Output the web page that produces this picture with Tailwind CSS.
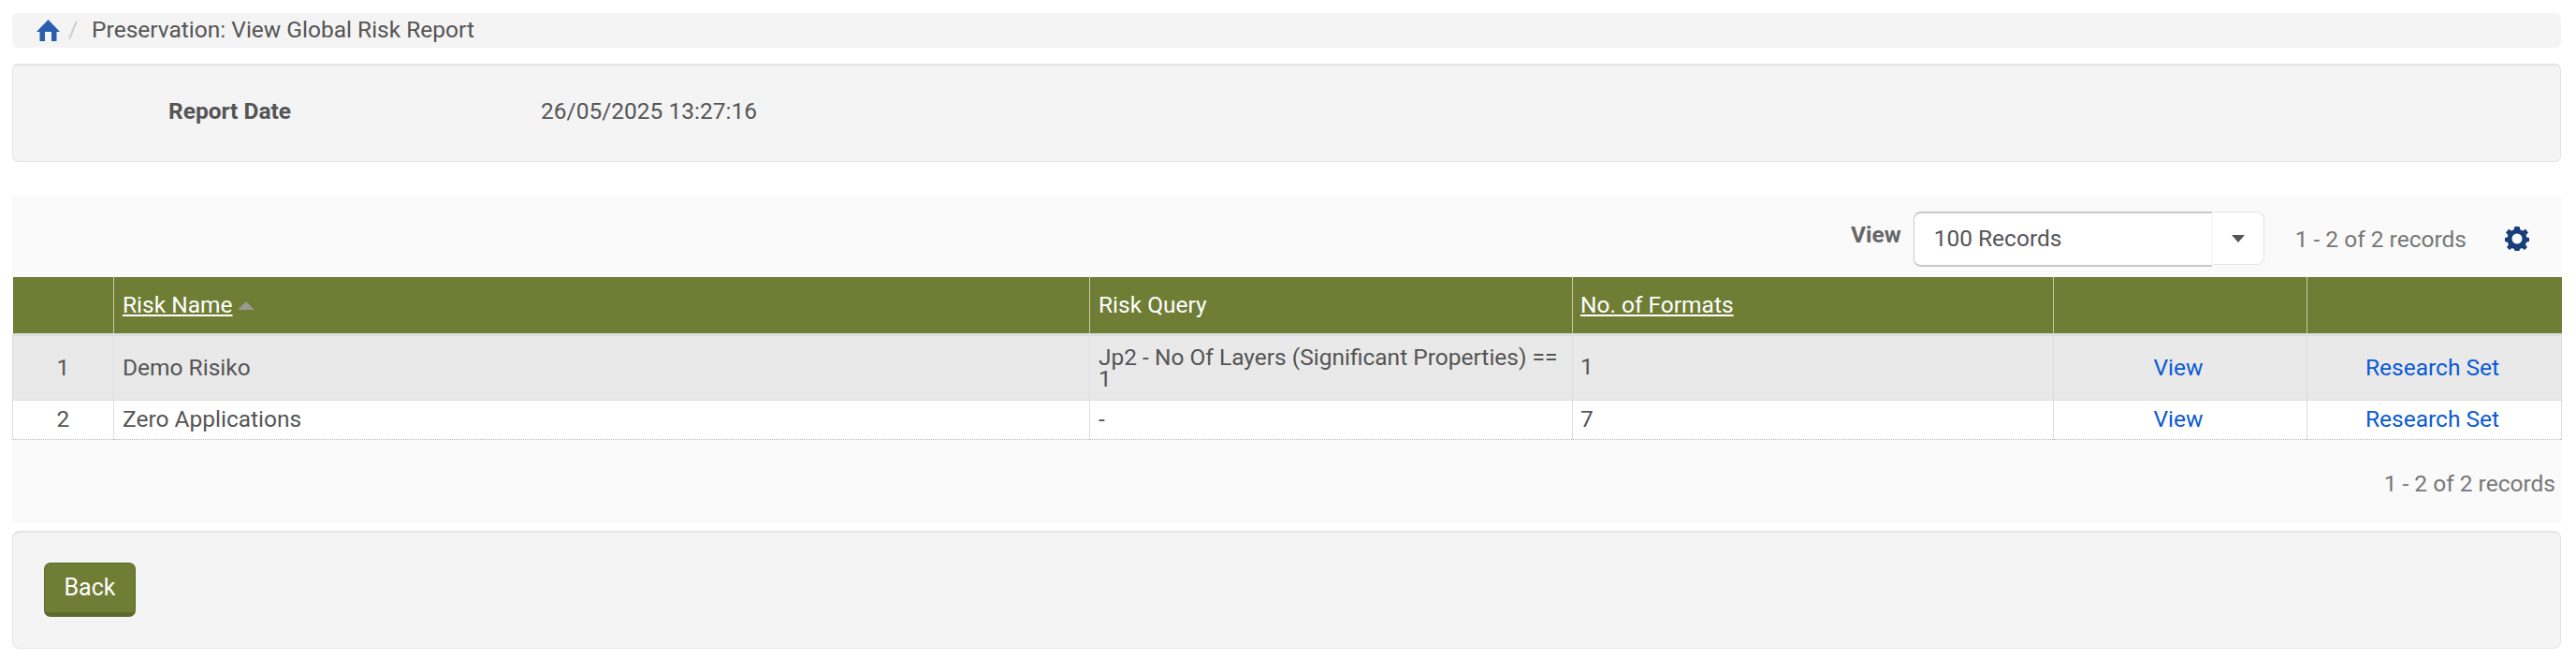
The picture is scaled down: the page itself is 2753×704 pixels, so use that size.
<!DOCTYPE html>
<html>
<head>
<meta charset="utf-8">
<script src="https://cdn.jsdelivr.net/npm/@tailwindcss/browser@4"></script>
</head>
<body class="bg-white font-['Roboto',sans-serif] text-[24.5px] text-[#555555] overflow-hidden">
<div class="w-[2753px] h-[704px] pl-[13px] pr-[16px] pt-[14px]">
  <nav class="h-[37px] bg-[#f4f4f4] rounded-[6px] flex items-center pl-[26px]">
    <svg class="w-[25px] h-[23px]" viewBox="0 0 25 23"><path fill="#2a5db0" d="M12.500 0 L25 13 L21.500 13 L21.500 23 L16 23 L16 13 L9 13 L9 23 L3.500 23 L3.500 13 L0 13 Z"/></svg>
    <span class="ml-[9px] text-[#cccccc]">/</span>
    <span class="ml-[15px]">Preservation: View Global Risk Report</span>
  </nav>
  <section class="mt-[17px] h-[105px] bg-[#f4f4f4] border border-[#e4e4e4] border-t-2 rounded-[6px] flex items-center pb-[3px]">
    <span class="ml-[166px] w-[398px] font-bold">Report Date</span>
    <span>26/05/2025 13:27:16</span>
  </section>
  <section class="mt-[35px] h-[350px] bg-[#fafafa]">
    <div class="h-[88px] flex items-start justify-end pt-[18px]">
      <span class="font-bold text-[#666666] mt-[7px] mr-[13px]">View</span>
      <div class="w-[375px] h-[59px] flex items-start">
        <span class="w-[319px] h-[59px] bg-white border border-[#c8c8c8] border-y-2 border-r-0 rounded-l-[8px] flex items-center pl-[21px]">100 Records</span>
        <span class="w-[56px] h-[57px] bg-white flex items-center justify-center border border-l-[#f7f7f7] border-y-[#e4e4e4] border-r-[#e0e0e0] rounded-r-[8px]">
          <span class="w-0 h-0 border-x-[7px] border-x-transparent border-t-[8px] border-t-[#555555]"></span>
        </span>
      </div>
      <span class="ml-[33px] mt-[12px] text-[#777777]">1 - 2 of 2 records</span>
      <svg class="ml-[41px] mt-[16px] w-[26px] h-[26px]" viewBox="0 0 26 26"><path fill="#173d7a" fill-rule="evenodd" d="M10.500 0H15.500L16.500 3.500 19 4.600 22 2.800 25 6.500 22.600 9 23.200 11.500 26 12V16L23 16.800 22 19.500 24 22 21 25 18.500 23 16 24 15.500 26H10.500L10 24 7.500 23 5 25 2 22 4 19.500 3 16.800 0 16V12L2.800 11.500 3.400 9 1 6.500 4 2.800 7 4.600 9.500 3.500ZM13 7.500A5.500 5.500 0 1 0 13 18.500 5.500 5.500 0 1 0 13 7.500Z"/></svg>
      <span class="w-[34px]"></span>
    </div>
    <table class="w-full table-fixed border-collapse">
      <colgroup>
        <col class="w-[108px]"><col class="w-[1043px]"><col class="w-[516px]"><col class="w-[514px]"><col class="w-[271px]"><col class="w-[272px]">
      </colgroup>
      <thead>
        <tr class="h-[61px] bg-[#6f7d35] text-white text-left font-normal">
          <th class="border-r border-[#c5ccaa] font-normal"></th>
          <th class="border-r border-[#c5ccaa] font-normal pl-[9px] pt-[2px]"><span class="underline">Risk Name</span><span class="inline-block ml-[6px] mb-[3px] align-middle w-0 h-0 border-x-[9px] border-x-transparent border-b-[9px] border-b-[#9a9a90]"></span></th>
          <th class="border-r border-[#c5ccaa] font-normal pl-[9px] pt-[2px]">Risk Query</th>
          <th class="border-r border-[#c5ccaa] font-normal pl-[8px] pt-[2px]"><span class="underline">No. of Formats</span></th>
          <th class="border-r border-[#c5ccaa] font-normal"></th>
          <th class="font-normal"></th>
        </tr>
      </thead>
      <tbody>
        <tr class="h-[70px] bg-[#e9e9e9] border-t-[3px] border-[#dddddd] border-b border-b-[#dcdcdc]">
          <td class="text-center border-x border-[#dcdcdc] pt-[2px]">1</td>
          <td class="pl-[9px] border-r border-[#dcdcdc] pt-[2px]">Demo Risiko</td>
          <td class="pl-[9px] pr-[9px] border-r border-[#dcdcdc] leading-[23px]">Jp2 - No Of Layers (Significant Properties) == 1</td>
          <td class="pl-[8px] border-r border-[#dcdcdc]">1</td>
          <td class="text-center border-r border-[#dcdcdc] text-[#0a5ad4] pt-[2px] pr-[4px]">View</td>
          <td class="text-center border-r border-[#dcdcdc] text-[#0a5ad4] pt-[2px] pr-[4px]">Research Set</td>
        </tr>
        <tr class="h-[42px] bg-white border-b border-dotted border-b-[#bbbbbb]">
          <td class="text-center border-x border-[#dcdcdc]">2</td>
          <td class="pl-[9px] border-r border-[#dcdcdc]">Zero Applications</td>
          <td class="pl-[9px] border-r border-[#dcdcdc]">-</td>
          <td class="pl-[8px] border-r border-[#dcdcdc]">7</td>
          <td class="text-center border-r border-[#dcdcdc] text-[#0a5ad4] pr-[4px]">View</td>
          <td class="text-center border-r border-[#dcdcdc] text-[#0a5ad4] pr-[4px]">Research Set</td>
        </tr>
      </tbody>
    </table>
    <div class="h-[87px] flex items-center justify-end pr-[6px] pt-[8px] text-[#777777]">1 - 2 of 2 records</div>
  </section>
  <section class="mt-[9px] h-[126px] bg-[#f4f4f4] border border-[#e4e4e4] border-t-2 rounded-[8px] pl-[33px] pt-[32px]">
    <button class="w-[98px] h-[58px] bg-[#6f7d35] border border-[#5d6a2c] border-b-[5px] rounded-[7px] text-white text-[25px]">Back</button>
  </section>
</div>
</body>
</html>
